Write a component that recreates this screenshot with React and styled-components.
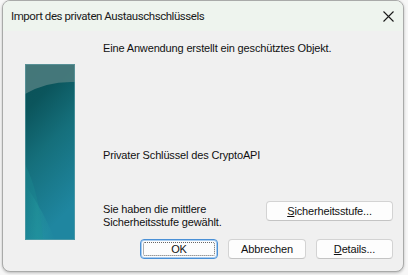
import React from "react"
import styled, { createGlobalStyle } from "styled-components"

const Global = createGlobalStyle`
    html, body {
        margin: 0;
        padding: 0;
        background: #f7f7f7;
        overflow: hidden;
    }
`

const Page = styled.div`
    width: 408px;
    height: 275px;
    padding-left: 2px;
    box-sizing: border-box;
`

const Window = styled.div`
    width: 402px;
    height: 272px;
    box-sizing: border-box;
    border: 1px solid #a9aaa9;
    border-radius: 8px;
    background: #f0f0f0;
    box-shadow: 0 1px 3px rgba(0, 0, 0, 0.25);
    overflow: hidden;
    display: flex;
    flex-direction: column;
`

const TitleBar = styled.div`
    height: 30px;
    flex: none;
    background: #eef4ee;
    display: flex;
    align-items: center;
    justify-content: space-between;
    padding: 0 9px 0 8px;
`

const Title = styled.span`
    font-family: Roboto, "Liberation Sans", sans-serif;
    font-size: 11.5px;
    color: #1a1a1a;
    letter-spacing: -0.45px;
`

const CloseButton = styled.div`
    width: 12px;
    height: 12px;
    display: flex;
    align-items: center;
    justify-content: center;
`

const Body = styled.div`
    flex: 1;
    display: flex;
    padding: 11px 10px 0 22px;
    gap: 28px;
`

const Picture = styled.div`
    flex: none;
    width: 50px;
    height: 176px;
    margin-top: 22px;
`

const Content = styled.div`
    flex: 1;
    display: flex;
    flex-direction: column;
    font-family: "Liberation Sans", Arial, sans-serif;
    font-size: 11px;
    line-height: 13px;
    letter-spacing: -0.15px;
    color: #111;
`

const Line = styled.div`
    margin-top: ${p => p.$gap || 0}px;
`

const LevelRow = styled.div`
    margin-top: 39px;
    display: flex;
    justify-content: space-between;
    align-items: flex-start;
`

const LevelText = styled.div`
    padding-top: 2px;
`

const Buttons = styled.div`
    margin-top: 10px;
    display: flex;
    justify-content: flex-end;
    gap: 10px;
`

const Button = styled.button`
    width: ${p => p.$width || 77}px;
    height: 20px;
    box-sizing: border-box;
    padding: 0;
    background: #fdfdfd;
    border: 1px solid #d3d3d3;
    border-bottom-color: #c4c4c4;
    border-radius: 4px;
    font-family: "Liberation Sans", Arial, sans-serif;
    font-size: 11px;
    letter-spacing: -0.15px;
    color: #111;
    display: flex;
    align-items: center;
    justify-content: center;
    position: relative;

    u {
        text-decoration-thickness: 1px;
        text-underline-offset: 1px;
    }
`

const DefaultButton = styled(Button)`
    border: 1px solid #4a90d6;
    box-shadow: inset 0 0 0 1px #a9cdf0;

    &::after {
        content: "";
        position: absolute;
        inset: 2px;
        border: 1px dotted #666;
        border-radius: 2px;
    }
`

const CloseIcon = () => (
    <svg width="11" height="11" viewBox="0 0 11 11">
        <path d="M0.5 0.5 L10.5 10.5 M10.5 0.5 L0.5 10.5" stroke="#1a1a1a" strokeWidth="1.1" />
    </svg>
)

const KeyArt = () => (
    <svg width="50" height="176" viewBox="0 0 50 176">
        <defs>
            <linearGradient id="base" x1="0" y1="0" x2="0.3" y2="1">
                <stop offset="0" stopColor="#0a4f55" />
                <stop offset="0.25" stopColor="#0b555c" />
                <stop offset="0.55" stopColor="#156f7b" />
                <stop offset="1" stopColor="#1f86a0" />
            </linearGradient>
            <linearGradient id="streak" x1="0" y1="0" x2="1" y2="0">
                <stop offset="0" stopColor="#2aa0a0" stopOpacity="0" />
                <stop offset="0.4" stopColor="#2aa6a6" stopOpacity="0.35" />
                <stop offset="1" stopColor="#2aa6a6" stopOpacity="0" />
            </linearGradient>
        </defs>
        <rect x="0" y="0" width="50" height="176" fill="url(#base)" />
        <path d="M0 120 Q20 150 30 176 L0 176 Z" fill="url(#streak)" />
        <path d="M0 100 Q15 130 18 176 L0 176 Z" fill="#1e9296" opacity="0.3" />
        <path d="M0 0 L50 0 L50 18 Q22 17 0 30 Z" fill="#4a7b7d" opacity="0.9" />
        <rect x="0.5" y="0.5" width="49" height="175" fill="none" stroke="#6aa5ad" strokeOpacity="0.55" />
    </svg>
)

const App = () => (
    <Page>
        <Global />
        <Window>
            <TitleBar>
                <Title>Import des privaten Austauschschlüssels</Title>
                <CloseButton><CloseIcon /></CloseButton>
            </TitleBar>
            <Body>
                <Picture><KeyArt /></Picture>
                <Content>
                    <Line>Eine Anwendung erstellt ein geschütztes Objekt.</Line>
                    <Line $gap={94}>Privater Schlüssel des CryptoAPI</Line>
                    <LevelRow>
                        <LevelText>
                            Sie haben die mittlere<br />
                            Sicherheitsstufe gewählt.
                        </LevelText>
                        <Button $width={127}><span><u>S</u>icherheitsstufe...</span></Button>
                    </LevelRow>
                    <Buttons>
                        <DefaultButton $width={78}>OK</DefaultButton>
                        <Button $width={78}>Abbrechen</Button>
                        <Button><span><u>D</u>etails...</span></Button>
                    </Buttons>
                </Content>
            </Body>
        </Window>
    </Page>
)

export default App
